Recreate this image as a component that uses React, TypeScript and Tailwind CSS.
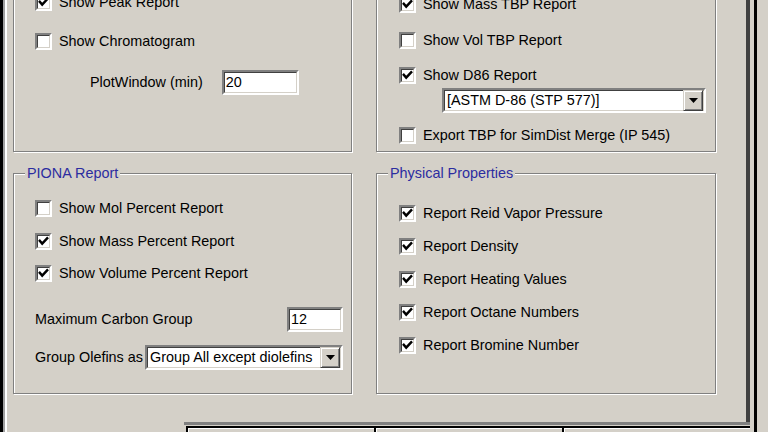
import React from "react";

function Check({ checked }: { checked?: boolean }) {
  return (
    <span className="inline-flex w-[17px] h-[17px] shrink-0 border-2 border-t-[#808080] border-l-[#808080] border-b-white border-r-white">
      <span className="flex-1 flex items-center justify-center bg-white border border-t-[#404040] border-l-[#404040] border-b-[#d4d0c8] border-r-[#d4d0c8]">
        {checked && (
          <svg width="11" height="11" viewBox="0 0 11 11">
            <polyline points="1.8,4.8 4.2,7.6 9.2,2.2" fill="none" stroke="#000" strokeWidth="2.4" strokeLinecap="square" />
          </svg>
        )}
      </span>
    </span>
  );
}

function Row({ label, checked, className = "" }: { label: string; checked?: boolean; className?: string }) {
  return (
    <div className={"flex items-center h-[24px] gap-[7px] " + className}>
      <Check checked={checked} />
      <span className="whitespace-nowrap">{label}</span>
    </div>
  );
}

function Field({ text, className = "" }: { text: string; className?: string }) {
  return (
    <div className={"flex h-[25px] border-2 border-t-[#808080] border-l-[#808080] border-b-white border-r-white " + className}>
      <div className="flex-1 flex items-center bg-white border border-t-[#404040] border-l-[#404040] border-b-[#d4d0c8] border-r-[#d4d0c8] pl-[1px]">
        {text}
      </div>
    </div>
  );
}

function Combo({ text, className = "" }: { text: string; className?: string }) {
  return (
    <div className={"flex h-[25px] border-2 border-t-[#808080] border-l-[#808080] border-b-white border-r-white " + className}>
      <div className="flex-1 flex items-center bg-white border border-t-[#404040] border-l-[#404040] border-b-[#d4d0c8] border-r-[#d4d0c8] pl-[2px] pr-0">
        <span className="flex-1 whitespace-nowrap overflow-hidden">{text}</span>
        <span className="w-[20px] h-[21px] flex items-center justify-center bg-[#d4d0c8] border border-t-[#d4d0c8] border-l-[#d4d0c8] border-b-[#404040] border-r-[#404040] shadow-[inset_1px_1px_0_#fff,inset_-1px_-1px_0_#808080]">
          <svg width="9" height="5" viewBox="0 0 9 5">
            <polygon points="0,0 9,0 4.5,5" fill="#000" />
          </svg>
        </span>
      </div>
    </div>
  );
}

function Group({ title, className = "", children }: { title?: string; className?: string; children: React.ReactNode }) {
  return (
    <div className={"relative border border-[#808080] shadow-[1px_1px_0_#fff,inset_1px_1px_0_#fff] " + className}>
      {title && (
        <span className="absolute -top-[10px] left-[11px] px-[2px] bg-[#d4d0c8] text-[#2c2ca0] leading-[18px] whitespace-nowrap">
          {title}
        </span>
      )}
      {children}
    </div>
  );
}

export default function App() {
  return (
    <div
      className="w-[768px] h-[432px] overflow-hidden flex bg-[#d4d0c8] text-black text-[14.4px] leading-none"
      style={{ fontFamily: '"Liberation Sans", Arial, sans-serif' }}
    >
      <div className="w-[3px] bg-black" />
      <div className="w-[2px] bg-[#a0a0a0]" />
      <div className="w-[2px] bg-white" />
      <div className="w-[743px] flex flex-col">
        <div className="h-[422px] border-r-4 border-[#404040] pl-[6px]">
          <div className="grid grid-cols-[339px_340px] gap-x-[24px] gap-y-[21px] -mt-[40px]">
            <Group className="h-[192px] flex flex-col pl-[21px] pt-[29px]">
              <Row label="Show Peak Report" checked />
              <Row label="Show Chromatogram" className="mt-[15px]" />
              <div className="flex items-center mt-[17px] pl-[55px]">
                <span className="whitespace-nowrap">PlotWindow (min)</span>
                <Field text="20" className="w-[77px] ml-[19px]" />
              </div>
            </Group>
            <Group className="h-[192px] flex flex-col pl-[22px] pt-[31px]">
              <Row label="Show Mass TBP Report" checked />
              <Row label="Show Vol TBP Report" className="mt-[12px]" />
              <Row label="Show D86 Report" checked className="mt-[11px]" />
              <Combo text="[ASTM D-86 (STP 577)]" className="w-[264px] ml-[43px] mt-[1px]" />
              <Row label="Export TBP for SimDist Merge (IP 545)" className="mt-[10px]" />
            </Group>
            <Group title="PIONA Report" className="h-[221px] flex flex-col pl-[21px] pt-[22px] pr-[8px]">
              <Row label="Show Mol Percent Report" />
              <Row label="Show Mass Percent Report" checked className="mt-[9px]" />
              <Row label="Show Volume Percent Report" checked className="mt-[8px]" />
              <div className="flex items-center justify-between mt-[22px]">
                <span className="whitespace-nowrap">Maximum Carbon Group</span>
                <Field text="12" className="w-[56px]" />
              </div>
              <div className="flex items-center justify-between mt-[13px]">
                <span className="whitespace-nowrap">Group Olefins as</span>
                <Combo text="Group All except diolefins" className="w-[198px]" />
              </div>
            </Group>
            <Group title="Physical Properties" className="h-[221px] flex flex-col gap-[9px] pl-[22px] pt-[27px]">
              <Row label="Report Reid Vapor Pressure" checked />
              <Row label="Report Density" checked />
              <Row label="Report Heating Values" checked />
              <Row label="Report Octane Numbers" checked />
              <Row label="Report Bromine Number" checked />
            </Group>
          </div>
        </div>
        <div className="flex h-[10px]">
          <div className="w-[178px]" />
          <div className="flex-1 border-t-[3px] border-[#808080] flex pl-[2px] pt-[1px]">
            <div className="w-[188px] border-t-2 border-l-2 border-black shadow-[inset_1px_1px_0_#fff]" />
            <div className="w-[188px] border-t-2 border-l-2 border-black shadow-[inset_1px_1px_0_#fff]" />
            <div className="w-[188px] border-t-2 border-l-2 border-black shadow-[inset_1px_1px_0_#fff]" />
          </div>
        </div>
      </div>
      <div className="w-[4px]" />
      <div className="w-[3px] bg-black" />
      <div className="flex-1" />
    </div>
  );
}
